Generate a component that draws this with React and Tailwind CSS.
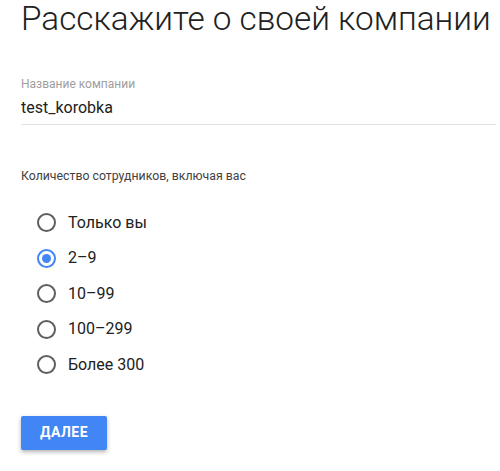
import React, { useState } from 'react';

const options = ['Только вы', '2–9', '10–99', '100–299', 'Более 300'];

function Radio({ checked }) {
  return (
    <span
      className={`grid h-[19px] w-[19px] shrink-0 place-items-center rounded-full border-2 ${
        checked ? 'border-[#4285f4]' : 'border-[#5f5f5f]'
      }`}
    >
      {checked ? <span className="h-[9px] w-[9px] rounded-full bg-[#4285f4]" /> : null}
    </span>
  );
}

export default function App() {
  const [size, setSize] = useState('2–9');
  const [name, setName] = useState('test_korobka');

  return (
    <div className="min-h-[471px] bg-white pl-[21px] pr-[4px] font-['Roboto',sans-serif] text-[#212121]">
      <h1 className="pt-[1px] text-[33.3px] font-light leading-[36px] text-[#212121]">
        Расскажите о своей компании
      </h1>

      <div className="mt-[40px]">
        <label className="block text-[12px] leading-[14px] text-[#9e9e9e]">Название компании</label>
        <input
          type="text"
          value={name}
          onChange={(event) => setName(event.target.value)}
          className="mt-[7px] block w-full border-b border-[#e0e0e0] pb-[6px] text-[16px] leading-[20px] text-[#212121] outline-none"
        />
      </div>

      <p className="mt-[44px] text-[12.3px] leading-[14px] text-[#424242]">Количество сотрудников, включая вас</p>

      <div className="mt-[22px] flex flex-col">
        {options.map((option) => (
          <label
            key={option}
            onClick={() => setSize(option)}
            className="flex h-[35.5px] cursor-pointer items-center gap-[12px] pl-[16px] text-[16px] text-[#212121]"
          >
            <Radio checked={size === option} />
            <span>{option}</span>
          </label>
        ))}
      </div>

      <button
        type="button"
        className="mt-[33px] h-[34px] w-[86px] rounded-[2px] bg-[#4285f4] text-[14px] font-bold uppercase tracking-[0.5px] text-white shadow-[0_2px_4px_rgba(0,0,0,0.3)]"
      >
        Далее
      </button>
    </div>
  );
}
